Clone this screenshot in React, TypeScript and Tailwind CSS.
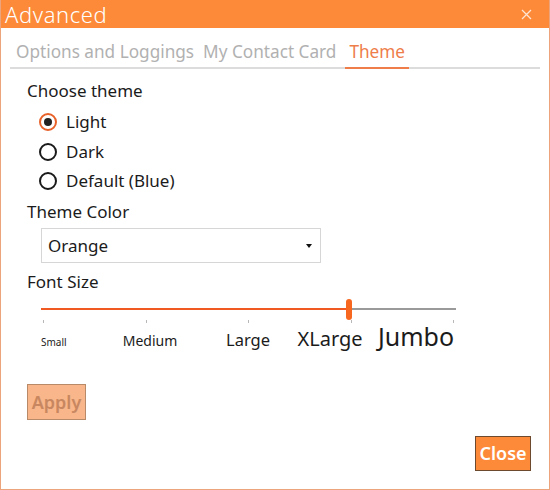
import React from 'react';

const tabs = ['Options and Loggings', 'My Contact Card', 'Theme'];
const themes = ['Light', 'Dark', 'Default (Blue)'];

const sizes = [
  { label: 'Small', cls: 'w-[59px] text-left text-[10px]' },
  { label: 'Medium', cls: 'w-[100px] text-center text-[14px]' },
  { label: 'Large', cls: 'w-[96px] text-center text-[16.5px]' },
  { label: 'XLarge', cls: 'w-[68px] text-center text-[20px]' },
  { label: 'Jumbo', cls: 'w-[104px] text-center text-[25px]' },
];

function Radio({ checked }: { checked: boolean }) {
  return (
    <span
      className={
        checked
          ? 'flex items-center justify-center w-[18px] h-[18px] rounded-full border-2 border-[#e8622a]'
          : 'flex items-center justify-center w-[18px] h-[18px] rounded-full border-2 border-[#1a1a1a]'
      }
    >
      {checked && <span className="w-[8px] h-[8px] rounded-full bg-[#222]" />}
    </span>
  );
}

export default function App() {
  return (
    <div
      className="w-[550px] h-[490px] flex flex-col bg-white border-x border-b border-[#eba47c] text-[#1b1b1b]"
      style={{ fontFamily: '"Noto Sans", "Open Sans", sans-serif' }}
    >
      {/* title bar */}
      <div className="h-[28px] flex items-center justify-between bg-[#fd8a38] text-white">
        <span className="pl-[4px] text-[22px] leading-[26px] tracking-[0.6px] font-light">Advanced</span>
        <svg className="mr-[17px]" width="11" height="11" viewBox="0 0 11 11">
          <path d="M1 1L10 10M10 1L1 10" stroke="#fde5d4" strokeWidth="1.3" />
        </svg>
      </div>

      {/* tabs */}
      <div className="mx-[9px] mt-[12px] flex items-end gap-[9px] pl-[6px] border-b-2 border-[#dcdcdc]">
        {tabs.map((t) => (
          <div
            key={t}
            className={
              t === 'Theme'
                ? 'px-[4px] pb-[3px] -mb-[2px] text-[17.2px] leading-[24px] text-[#ee7d4a] border-b-2 border-[#ee7d4a]'
                : 'pb-[3px] text-[17.2px] leading-[24px] text-[#b1b1b1]'
            }
          >
            {t}
          </div>
        ))}
      </div>

      <div className="flex flex-col pl-[26px] pt-[11px]">
        <div className="text-[17px] leading-[22px]">Choose theme</div>

        <div className="flex flex-col pl-[12px] pt-[9px] gap-[7.5px]">
          {themes.map((t, i) => (
            <label key={t} className="flex items-center gap-[9px] h-[22px] text-[17px]">
              <Radio checked={i === 0} />
              <span>{t}</span>
            </label>
          ))}
        </div>

        <div className="mt-[9px] text-[17px] leading-[22px]">Theme Color</div>

        <div className="ml-[14px] mt-[5px] w-[280px] h-[35px] flex items-center justify-between border border-[#d6d6d6] pl-[6px] pr-[8px]">
          <span className="text-[17px]">Orange</span>
          <svg width="6" height="4" viewBox="0 0 6 4">
            <path d="M0 0H6L3 4Z" fill="#111" />
          </svg>
        </div>

        <div className="mt-[8px] text-[17px] leading-[22px]">Font Size</div>

        {/* slider */}
        <div className="ml-[14px] mt-[5px] w-[415px] flex flex-col">
          <div className="flex items-center h-[22px]">
            <div className="w-[305px] h-[2px] bg-[#f05a22]" />
            <div className="w-[6px] h-[21px] rounded-[3px] bg-[#f7671f]" />
            <div className="flex-1 h-[2px] bg-[#9a9a9a]" />
          </div>
          <div className="flex justify-between px-[2px] h-[4px]">
            {sizes.map((s) => (
              <span key={s.label} className="w-px h-[3px] bg-[#b8b8b8]" />
            ))}
          </div>
          <div className="flex items-baseline leading-none">
            {sizes.map((s) => (
              <span key={s.label} className={`shrink-0 ${s.cls}`}>
                {s.label}
              </span>
            ))}
          </div>
        </div>

        <button className="mt-[35px] w-[59px] h-[36px] bg-[#f9b68a] border border-[#b98a68] text-[#c88760] text-[18px] font-semibold">
          Apply
        </button>
      </div>

      <div className="flex-1" />
      <div className="flex justify-end pr-[18px] pb-[18px]">
        <button className="w-[56px] h-[35px] bg-[#fd8a38] border border-[#6d4a2e] text-white text-[18px] font-semibold">
          Close
        </button>
      </div>
    </div>
  );
}
